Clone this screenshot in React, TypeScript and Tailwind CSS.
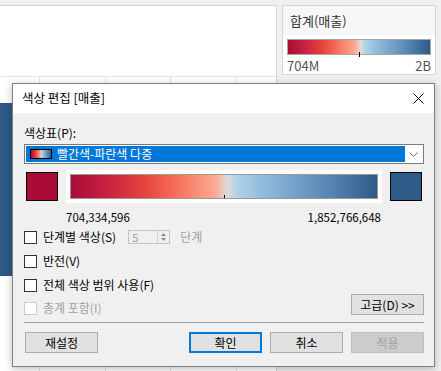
import React from "react";

const GRAD =
  "linear-gradient(to right, #a90c38 0%, #c8223f 12%, #e4443f 24%, #f2604f 31%, #f98a70 40%, #fca892 47%, #dedbd8 51%, #b2d3e8 54%, #93bddc 62%, #74a2c9 73%, #5684b3 85%, #2e5a87 100%)";

function Checkbox({ disabled }: { disabled?: boolean }) {
  return (
    <div
      className={
        "w-[13px] h-[13px] border bg-white shrink-0 " +
        (disabled ? "border-[#cccccc]" : "border-[#333333]")
      }
    />
  );
}

function Btn({
  children,
  variant,
}: {
  children: React.ReactNode;
  variant?: "primary" | "disabled";
}) {
  const cls =
    variant === "primary"
      ? "border-2 border-[#0078d7] bg-[#e1e1e1] text-black"
      : variant === "disabled"
      ? "border border-[#bfbfbf] bg-[#cccccc] text-[#a0a0a0]"
      : "border border-[#adadad] bg-[#e1e1e1] text-black";
  return (
    <div
      className={
        "w-[73px] h-[21px] flex items-center justify-center text-[12px] leading-none " +
        cls
      }
    >
      {children}
    </div>
  );
}

export default function App() {
  return (
    <div
      className="relative w-[441px] h-[371px] overflow-hidden bg-[#f0f0f0] text-black"
      style={{ fontFamily: '"Noto Sans CJK KR", "Noto Sans", sans-serif' }}
    >
      {/* background worksheet */}
      <div className="flex pt-[5px]">
        <div className="w-[277px] h-[366px] bg-white border-t border-r border-[#d4d4d4] flex flex-col">
          <div className="h-[70px] shrink-0" />
          <div className="flex-1 flex border-t border-[#e3e3e3]">
            <div className="w-[40px] border-r border-[#e3e3e3] shrink-0">
              <div className="mt-[26px] h-[173px] w-[20px] bg-[#2c5985]" />
            </div>
            <div className="w-[66px] border-r border-[#e3e3e3] shrink-0" />
            <div className="w-[65px] border-r border-[#e3e3e3] shrink-0" />
            <div className="w-[66px] border-r border-[#e3e3e3] shrink-0" />
            <div className="flex-1" />
          </div>
        </div>
        <div className="ml-[5px] w-[154px] h-[70px] border border-[#d4d4d4] bg-white flex flex-col">
          <div className="h-[29px] bg-[#f7f7f7] flex items-center px-[7px] text-[13px] text-[#333]">
            합계(매출)
          </div>
          <div className="px-[4px] pt-[4px]">
            <div className="relative h-[16px] border border-[#a6a6a6]" style={{ background: GRAD }}>
              <div className="absolute left-[71px] top-[12px] w-px h-[5px] bg-black" />
            </div>
            <div className="flex justify-between text-[13px] leading-[17px] text-[#555] mt-[2px]">
              <span>704M</span>
              <span>2B</span>
            </div>
          </div>
        </div>
      </div>

      {/* dialog */}
      <div className="absolute left-[12px] top-[83px] w-[423px] h-[284px] border border-[#7f7f7f] bg-[#f0f0f0] shadow-[0_2px_8px_rgba(0,0,0,0.25)] flex flex-col">
        <div className="h-[29px] bg-white flex items-center justify-between pl-[9px] pr-[9px] shrink-0">
          <span className="text-[12.5px]">색상 편집 [매출]</span>
          <svg width="11" height="11" viewBox="0 0 11 11" className="mr-[1px]">
            <path d="M0.5 0.5 L10.5 10.5 M10.5 0.5 L0.5 10.5" stroke="#000" strokeWidth="1" />
          </svg>
        </div>

        <div className="flex flex-col pl-[11px] pr-[10px] text-[12px]">
          <div className="mt-[12px] h-[16px] leading-[16px]">색상표(P):</div>

          {/* dropdown */}
          <div className="mt-[3px] h-[20px] border border-[#7a7a7a] bg-white flex items-stretch p-[1px]">
            <div className="flex-1 bg-[#0078d7] flex items-center pl-[4px] text-white">
              <div className="w-[22px] h-[10px] border border-black" style={{ background: GRAD }} />
              <span className="ml-[5px] leading-none">빨간색-파란색 다중</span>
            </div>
            <div className="w-[17px] flex items-center justify-center">
              <svg width="9" height="5" viewBox="0 0 9 5">
                <path d="M0.5 0.5 L4.5 4.5 L8.5 0.5" stroke="#6a6a6a" strokeWidth="1" fill="none" />
              </svg>
            </div>
          </div>

          {/* swatch row */}
          <div className="mt-[6px] h-[33px] flex items-center">
            <div className="ml-[2px] w-[32px] h-[29px] border border-black bg-[#a90c38]" />
            <div className="ml-[8px] w-[316px] h-[33px] bg-white p-[4px]">
              <div className="relative h-full border border-[#9a9a94]" style={{ background: GRAD }}>
                <div className="absolute left-[153px] bottom-0 w-px h-[3px] bg-black" />
              </div>
            </div>
            <div className="ml-[8px] w-[32px] h-[29px] border border-black bg-[#2e5a87]" />
          </div>

          {/* numbers */}
          <div className="mt-[6px] h-[16px] leading-[16px] text-[11.5px] flex justify-between w-[316px] ml-[42px] pr-[1px]">
            <span>704,334,596</span>
            <span>1,852,766,648</span>
          </div>

          {/* checkbox rows */}
          <div className="h-[24px] flex items-center">
            <Checkbox />
            <span className="ml-[6px]">단계별 색상(S)</span>
            <div className="ml-[12px] w-[42px] h-[14px] border border-[#c4c4c4] bg-[#f0f0f0] flex">
              <span className="flex-1 pl-[3px] text-[11px] leading-[12px] text-[#a0a0a0]">5</span>
              <div className="w-[12px] border-l border-[#d0d0d0] flex flex-col items-center justify-center gap-[2px]">
                <svg width="5" height="3" viewBox="0 0 5 3">
                  <path d="M0 3 L2.5 0 L5 3 Z" fill="#8a8a8a" />
                </svg>
                <svg width="5" height="3" viewBox="0 0 5 3">
                  <path d="M0 0 L2.5 3 L5 0 Z" fill="#8a8a8a" />
                </svg>
              </div>
            </div>
            <span className="ml-[10px] text-[#a0a0a0]">단계</span>
          </div>
          <div className="h-[24px] flex items-center">
            <Checkbox />
            <span className="ml-[6px]">반전(V)</span>
          </div>
          <div className="h-[24px] flex items-center">
            <Checkbox />
            <span className="ml-[6px]">전체 색상 범위 사용(F)</span>
          </div>
          <div className="h-[22px] flex items-center justify-between">
            <div className="flex items-center">
              <Checkbox disabled />
              <span className="ml-[6px] text-[#a0a0a0]">총계 포함(I)</span>
            </div>
            <div className="-mt-[7px]">
              <Btn>고급(D) &gt;&gt;</Btn>
            </div>
          </div>

          <div className="mt-[3px] border-t border-[#a0a0a0]" />

          <div className="mt-[9px] flex items-center">
            <div className="ml-[1px]">
              <Btn>재설정</Btn>
            </div>
            <div className="flex-1" />
            <Btn variant="primary">확인</Btn>
            <div className="w-[8px]" />
            <Btn>취소</Btn>
            <div className="w-[8px]" />
            <Btn variant="disabled">적용</Btn>
          </div>
        </div>
      </div>
    </div>
  );
}
